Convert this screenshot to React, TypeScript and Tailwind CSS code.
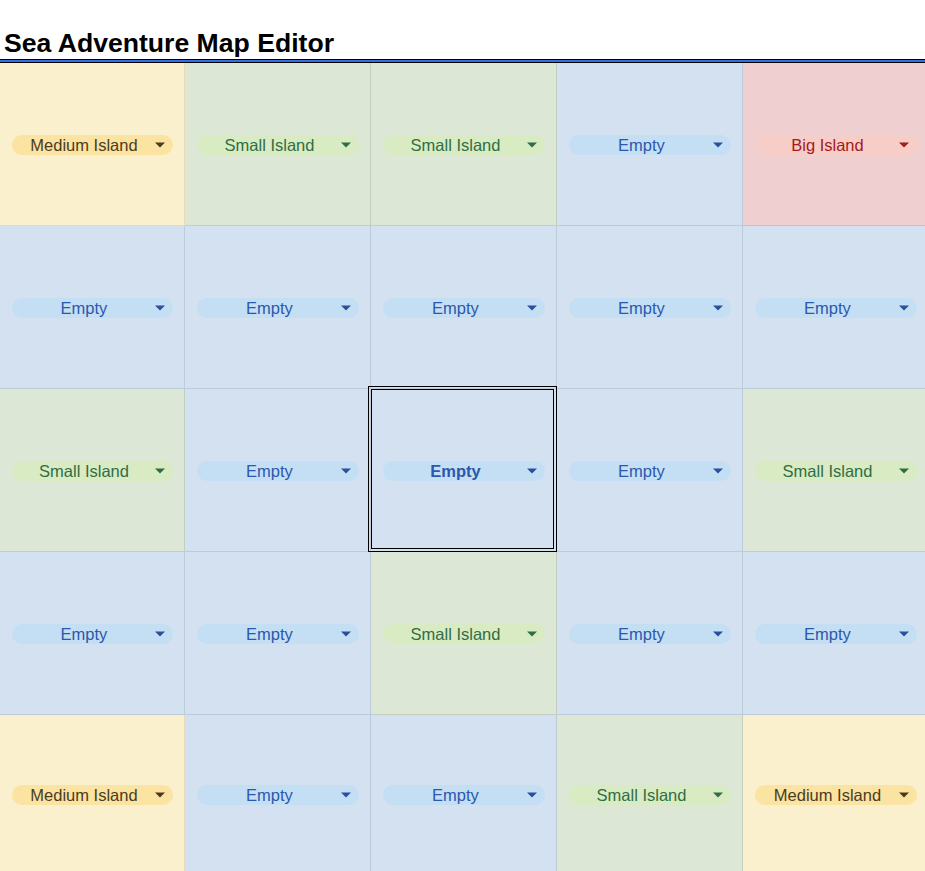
import React from "react";

type Kind = "medium" | "small" | "empty" | "big";

const LABEL: Record<Kind, string> = {
  medium: "Medium Island",
  small: "Small Island",
  empty: "Empty",
  big: "Big Island",
};

const CELL: Record<Kind, string> = {
  medium: "bg-[#fbf0ce] border-[#e6dbb9]",
  small: "bg-[#dce8d5] border-[#c2cfc0]",
  empty: "bg-[#d3e1f1] border-[#bccad9]",
  big: "bg-[#efcfcf] border-[#d8b8b8]",
};

const CHIP: Record<Kind, string> = {
  medium: "bg-[#fbe3a1] text-[#4a3c1f]",
  small: "bg-[#d8ebc3] text-[#2f6e45]",
  empty: "bg-[#c4dff4] text-[#2b58ad]",
  big: "bg-[#f7cdc7] text-[#a31b1b]",
};

const CARET: Record<Kind, string> = {
  medium: "#4b3b22",
  small: "#2f6e45",
  empty: "#2b4f9e",
  big: "#a31b1b",
};

const M: Kind = "medium";
const S: Kind = "small";
const E: Kind = "empty";
const B: Kind = "big";

const GRID: Kind[][] = [
  [M, S, S, E, B],
  [E, E, E, E, E],
  [S, E, E, E, S],
  [E, E, S, E, E],
  [M, E, E, S, M],
];

function Cell({ kind, selected }: { kind: Kind; selected: boolean }) {
  return (
    <div
      className={`relative flex h-full items-center border-r border-b pt-[2px] ${CELL[kind]} ${
        selected ? "z-10" : ""
      }`}
    >
      {selected && (
        <div className="pointer-events-none absolute -top-[3px] -left-[3px] -right-[1px] -bottom-[1px] border-[4px] border-double border-black" />
      )}
      <div
        className={`ml-[12px] mr-[11px] flex h-[20px] flex-1 items-center rounded-full pl-[10px] pr-[8px] text-[16.5px] leading-[20px] ${CHIP[kind]} ${
          selected ? "font-bold" : ""
        }`}
      >
        <span className="flex-1 text-center whitespace-nowrap">{LABEL[kind]}</span>
        <svg width="10" height="6" viewBox="0 0 10 6" className="ml-[9px] shrink-0">
          <path d="M0 0.5H10L5 5.5Z" fill={CARET[kind]} />
        </svg>
      </div>
    </div>
  );
}

export default function App() {
  return (
    <div
      className="h-screen w-full overflow-hidden bg-white text-black"
      style={{ fontFamily: '"Liberation Sans", Arial, sans-serif' }}
    >
      <div className="pt-[28px]">
        <h1 className="mb-[1px] pl-[4px] text-[26.6px] font-bold leading-[30px]">
          Sea Adventure Map Editor
        </h1>
        <div className="h-[4px] w-full border-y border-black bg-[#3170e0]" />
      </div>
      <div className="grid w-[929px] grid-cols-[185px_186px_186px_186px_186px] grid-rows-[163px_163px_163px_163px_159px]">
        {GRID.map((row, r) =>
          row.map((kind, c) => (
            <Cell key={`${r}-${c}`} kind={kind} selected={r === 2 && c === 2} />
          ))
        )}
      </div>
    </div>
  );
}
